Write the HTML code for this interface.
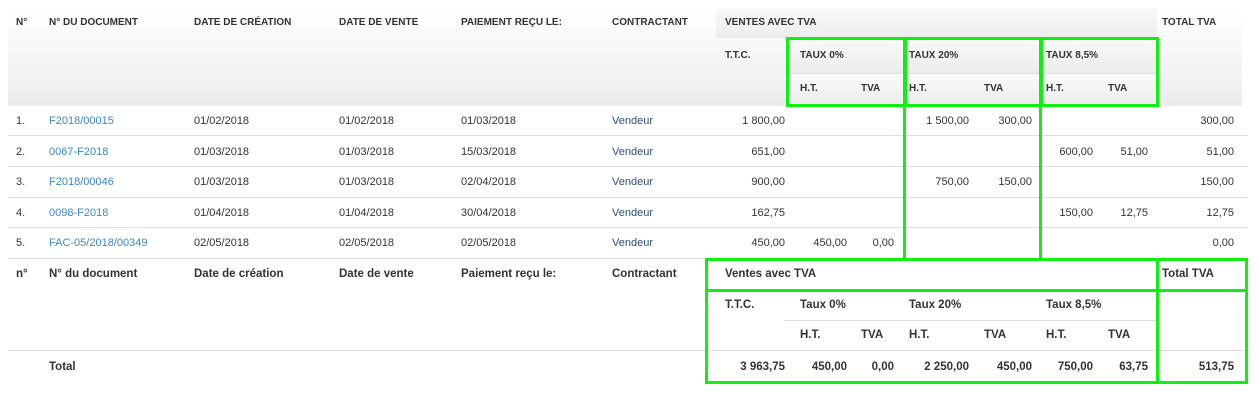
<!DOCTYPE html><html><head><meta charset="utf-8"><style>
body{margin:0;width:1256px;height:402px;background:#fff;position:relative;overflow:hidden;font-family:"Liberation Sans",Arial,sans-serif;color:#333}
.a{position:absolute;white-space:nowrap;font-size:11px;line-height:14px}
.h{font-weight:bold;font-size:10px}
.b{font-weight:bold;font-size:11.5px}
.l{color:#3a87c8}
.bg{position:absolute;background:linear-gradient(#fff,#ececec)}
.ln{position:absolute;height:1px;background:#ddd}
.g{position:absolute;border:3px solid #10f010;box-sizing:border-box}
.gv{position:absolute;width:3px;background:#10f010}
</style></head><body>
<div class="bg" style="left:8px;top:8px;width:1234px;height:98px"></div>
<div class="bg" style="left:716px;top:8px;width:441px;height:30px;background:linear-gradient(#fafafa,#ececec)"></div>
<div class="bg" style="left:786px;top:38px;width:371px;height:35px;background:linear-gradient(#fafafa,#ececec)"></div>
<div class="ln" style="left:786px;top:73px;width:371px"></div>
<div class="bg" style="left:786px;top:74px;width:371px;height:32px;background:linear-gradient(#fafafa,#ececec)"></div>

<span class="a h" style="left:16px;top:16px">N°</span>
<span class="a h" style="left:49px;top:16px">N° DU DOCUMENT</span>
<span class="a h" style="left:194px;top:16px">DATE DE CRÉATION</span>
<span class="a h" style="left:339px;top:16px">DATE DE VENTE</span>
<span class="a h" style="left:461px;top:16px">PAIEMENT REÇU LE:</span>
<span class="a h" style="left:612px;top:16px">CONTRACTANT</span>
<span class="a h" style="left:725px;top:16px">VENTES AVEC TVA</span>
<span class="a h" style="left:1162px;top:16px">TOTAL TVA</span>
<span class="a h" style="left:725px;top:49px">T.T.C.</span>
<span class="a h" style="left:800px;top:49px">TAUX 0%</span>
<span class="a h" style="left:909px;top:49px">TAUX 20%</span>
<span class="a h" style="left:1046px;top:49px">TAUX 8,5%</span>
<span class="a h" style="left:800px;top:82px">H.T.</span>
<span class="a h" style="left:861px;top:82px">TVA</span>
<span class="a h" style="left:909px;top:82px">H.T.</span>
<span class="a h" style="left:984px;top:82px">TVA</span>
<span class="a h" style="left:1046px;top:82px">H.T.</span>
<span class="a h" style="left:1108px;top:82px">TVA</span>

<div class="ln" style="left:8px;top:135px;width:1240px"></div>
<div class="ln" style="left:8px;top:166px;width:1240px"></div>
<div class="ln" style="left:8px;top:197px;width:1240px"></div>
<div class="ln" style="left:8px;top:227px;width:1240px"></div>
<div class="ln" style="left:8px;top:258px;width:1240px"></div>
<div class="ln" style="left:784px;top:320px;width:373px"></div>
<div class="ln" style="left:8px;top:350px;width:1240px"></div>

<span class="a" style="left:16px;top:114px">1.</span><span class="a l" style="left:49px;top:114px">F2018/00015</span><span class="a" style="left:194px;top:114px">01/02/2018</span><span class="a" style="left:339px;top:114px">01/02/2018</span><span class="a" style="left:461px;top:114px">01/03/2018</span><span class="a" style="left:612px;top:114px;color:#2a4f7a">Vendeur</span>
<span class="a" style="right:471px;top:114px">1 800,00</span><span class="a" style="right:287px;top:114px">1 500,00</span><span class="a" style="right:224px;top:114px">300,00</span><span class="a" style="right:22px;top:114px">300,00</span>

<span class="a" style="left:16px;top:145px">2.</span><span class="a l" style="left:49px;top:145px">0067-F2018</span><span class="a" style="left:194px;top:145px">01/03/2018</span><span class="a" style="left:339px;top:145px">01/03/2018</span><span class="a" style="left:461px;top:145px">15/03/2018</span><span class="a" style="left:612px;top:145px;color:#2a4f7a">Vendeur</span>
<span class="a" style="right:471px;top:145px">651,00</span><span class="a" style="right:163px;top:145px">600,00</span><span class="a" style="right:108px;top:145px">51,00</span><span class="a" style="right:22px;top:145px">51,00</span>

<span class="a" style="left:16px;top:175px">3.</span><span class="a l" style="left:49px;top:175px">F2018/00046</span><span class="a" style="left:194px;top:175px">01/03/2018</span><span class="a" style="left:339px;top:175px">01/03/2018</span><span class="a" style="left:461px;top:175px">02/04/2018</span><span class="a" style="left:612px;top:175px;color:#2a4f7a">Vendeur</span>
<span class="a" style="right:471px;top:175px">900,00</span><span class="a" style="right:287px;top:175px">750,00</span><span class="a" style="right:224px;top:175px">150,00</span><span class="a" style="right:22px;top:175px">150,00</span>

<span class="a" style="left:16px;top:206px">4.</span><span class="a l" style="left:49px;top:206px">0098-F2018</span><span class="a" style="left:194px;top:206px">01/04/2018</span><span class="a" style="left:339px;top:206px">01/04/2018</span><span class="a" style="left:461px;top:206px">30/04/2018</span><span class="a" style="left:612px;top:206px;color:#2a4f7a">Vendeur</span>
<span class="a" style="right:471px;top:206px">162,75</span><span class="a" style="right:163px;top:206px">150,00</span><span class="a" style="right:108px;top:206px">12,75</span><span class="a" style="right:22px;top:206px">12,75</span>

<span class="a" style="left:16px;top:236px">5.</span><span class="a l" style="left:49px;top:236px">FAC-05/2018/00349</span><span class="a" style="left:194px;top:236px">02/05/2018</span><span class="a" style="left:339px;top:236px">02/05/2018</span><span class="a" style="left:461px;top:236px">02/05/2018</span><span class="a" style="left:612px;top:236px;color:#2a4f7a">Vendeur</span>
<span class="a" style="right:471px;top:236px">450,00</span><span class="a" style="right:409px;top:236px">450,00</span><span class="a" style="right:362px;top:236px">0,00</span><span class="a" style="right:22px;top:236px">0,00</span>

<span class="a b" style="left:16px;top:267px">n°</span>
<span class="a b" style="left:49px;top:267px">N° du document</span>
<span class="a b" style="left:194px;top:267px">Date de création</span>
<span class="a b" style="left:339px;top:267px">Date de vente</span>
<span class="a b" style="left:461px;top:267px">Paiement reçu le:</span>
<span class="a b" style="left:612px;top:267px">Contractant</span>
<span class="a b" style="left:725px;top:267px">Ventes avec TVA</span>
<span class="a b" style="left:1162px;top:267px">Total TVA</span>
<span class="a b" style="left:725px;top:298px">T.T.C.</span>
<span class="a b" style="left:800px;top:298px">Taux 0%</span>
<span class="a b" style="left:909px;top:298px">Taux 20%</span>
<span class="a b" style="left:1046px;top:298px">Taux 8,5%</span>
<span class="a b" style="left:800px;top:328px">H.T.</span>
<span class="a b" style="left:861px;top:328px">TVA</span>
<span class="a b" style="left:909px;top:328px">H.T.</span>
<span class="a b" style="left:984px;top:328px">TVA</span>
<span class="a b" style="left:1046px;top:328px">H.T.</span>
<span class="a b" style="left:1108px;top:328px">TVA</span>

<span class="a b" style="left:49px;top:360px">Total</span>
<span class="a b" style="right:471px;top:360px">3 963,75</span>
<span class="a b" style="right:409px;top:360px">450,00</span>
<span class="a b" style="right:362px;top:360px">0,00</span>
<span class="a b" style="right:287px;top:360px">2 250,00</span>
<span class="a b" style="right:224px;top:360px">450,00</span>
<span class="a b" style="right:163px;top:360px">750,00</span>
<span class="a b" style="right:108px;top:360px">63,75</span>
<span class="a b" style="right:22px;top:360px">513,75</span>

<div class="g" style="left:786px;top:37px;width:121px;height:70px"></div>
<div class="g" style="left:903px;top:37px;width:140px;height:70px"></div>
<div class="g" style="left:1039px;top:37px;width:120px;height:70px"></div>
<div class="gv" style="left:903px;top:106px;height:154px"></div>
<div class="gv" style="left:1039px;top:106px;height:154px"></div>
<div class="g" style="left:705px;top:258px;width:454px;height:34px"></div>
<div class="g" style="left:705px;top:289px;width:454px;height:95px"></div>
<div class="g" style="left:1156px;top:258px;width:92px;height:34px"></div>
<div class="g" style="left:1156px;top:289px;width:92px;height:95px"></div>
</body></html>
